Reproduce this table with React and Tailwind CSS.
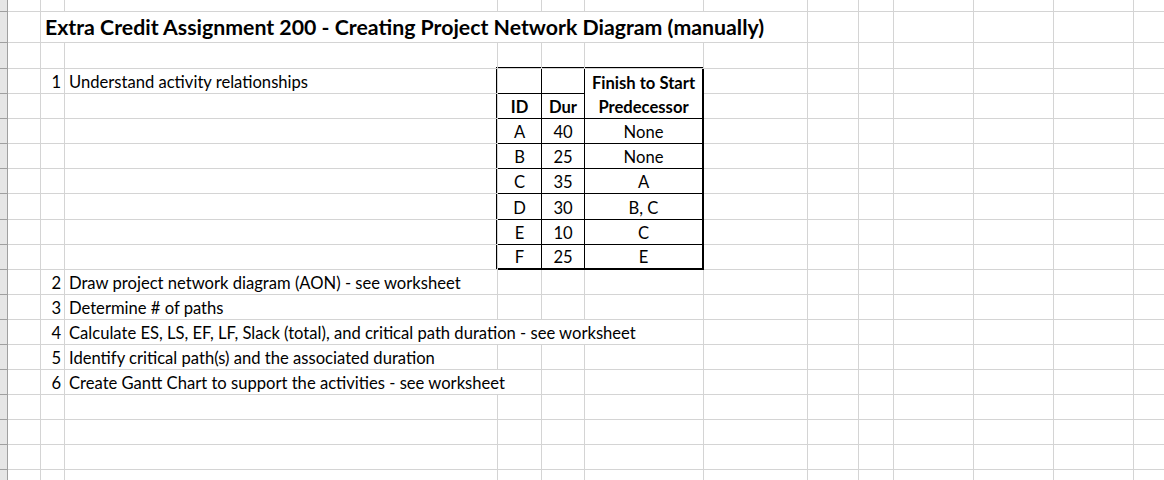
import clsx from 'clsx';

const spanClass = { 1: '', 2: 'col-span-2', 4: 'col-span-4', 6: 'col-span-6' };

function Cell({ span = 1, className = '', children }) {
    return (
        <div
            className={clsx(
                'flex items-end whitespace-nowrap border-r border-b border-[#d4d4d4] min-w-0',
                spanClass[span],
                className
            )}
        >
            {children}
        </div>
    );
}

// one spreadsheet row: row header strip + columns A..M (0..12)
function SheetRow({ title, num, text, span = 1, table }) {
    const cells = [<div key="h" className="bg-[#e6e6e6] border-r border-b border-[#a0a0a0]" />];
    cells.push(<Cell key="a" />);
    let next;
    if (title) {
        cells.push(
            <Cell key="b" span={6} className="pl-[4px] pb-[2px] text-[21.3px] leading-[25px] font-bold">
                {title}
            </Cell>
        );
        next = 7;
    } else {
        cells.push(
            <Cell key="b" className="justify-end pr-[3px] pb-[1px] leading-[19px]">
                {num}
            </Cell>
        );
        cells.push(
            <Cell key="c" span={span} className="pl-[4px] pb-[1px] leading-[19px]">
                {text}
            </Cell>
        );
        next = 2 + span;
    }
    if (table && next <= 3) next = 6;
    for (let c = next; c <= 12; c++) cells.push(<Cell key={c} />);
    return <>{cells}</>;
}

const tableRows = [
    ['', '', 'Finish to Start'],
    ['ID', 'Dur', 'Predecessor'],
    ['A', '40', 'None'],
    ['B', '25', 'None'],
    ['C', '35', 'A'],
    ['D', '30', 'B, C'],
    ['E', '10', 'C'],
    ['F', '25', 'E'],
];

function ActivityTable() {
    return (
        <div className="col-start-5 col-end-8 row-start-4 row-end-12 -ml-[2px] -mt-[2px] grid grid-cols-[44px_43px_117px] grid-rows-[25px_25px_25px_25px_25px_26px_25px_23px] border-2 border-black bg-white">
            {tableRows.map((row, r) =>
                row.map((val, c) => (
                    <div
                        key={`${r}-${c}`}
                        className={clsx(
                            'flex items-end justify-center pb-[1px] leading-[19px] whitespace-nowrap border-black',
                            c < 2 && 'border-r',
                            r < 7 && !(r === 0 && c === 2) && 'border-b',
                            r < 2 && 'font-bold'
                        )}
                    >
                        {val}
                    </div>
                ))
            )}
        </div>
    );
}

const rows = [
    {},
    { title: 'Extra Credit Assignment 200 - Creating Project Network Diagram (manually)' },
    {},
    { num: 1, text: 'Understand activity relationships', table: true },
    { table: true },
    { table: true },
    { table: true },
    { table: true },
    { table: true },
    { table: true },
    { table: true },
    { num: 2, text: 'Draw project network diagram (AON) - see worksheet' },
    { num: 3, text: 'Determine # of paths' },
    { num: 4, text: 'Calculate ES, LS, EF, LF, Slack (total), and critical path duration - see worksheet', span: 4 },
    { num: 5, text: 'Identify critical path(s) and the associated duration' },
    { num: 6, text: 'Create Gantt Chart to support the activities - see worksheet', span: 2 },
    {},
    {},
    {},
    {},
];

export default function App() {
    return (
        <div className="w-[1164px] h-[480px] overflow-hidden bg-white text-black text-[16.6px] font-['Lato',sans-serif]">
            <div className="grid grid-cols-[8px_33px_24px_433px_44px_43px_119px_104px_51px_35px_80px_80px_80px_80px] grid-rows-[12px_31px_26px_25px_25px_25px_25px_25px_26px_25px_25px_25px_25px_25px_25px_25px_25px_25px_25px_25px]">
                <ActivityTable />
                {rows.map((r, i) => (
                    <SheetRow key={i} {...r} />
                ))}
            </div>
        </div>
    );
}
